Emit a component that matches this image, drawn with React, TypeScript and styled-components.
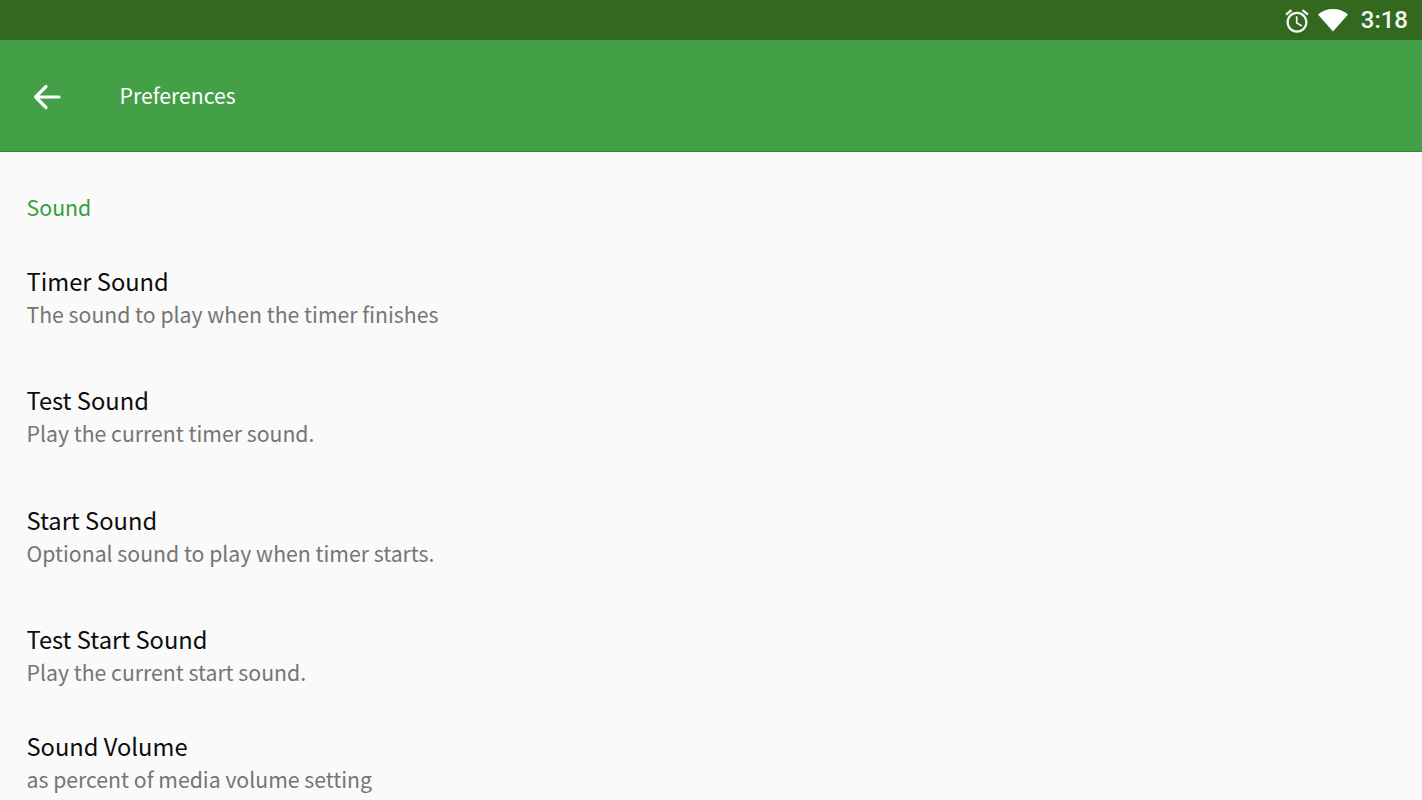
import React from "react";
import styled, { createGlobalStyle } from "styled-components";

const Global = createGlobalStyle`
  html, body { margin: 0; padding: 0; background: #fafafa; overflow: hidden; }
  body { font-family: "Noto Sans CJK SC", "Noto Sans", sans-serif; }
`;
const Page = styled.div`
  width: 1422px; height: 800px; display: flex; flex-direction: column; overflow: hidden; background: #fafafa;
`;
const StatusBar = styled.div`
  height: 40px; flex: none; background: #33691e; display: flex; align-items: center; justify-content: flex-end;
  padding-right: 14px; gap: 7px; color: #fff;
`;
const AlarmIcon = styled.svg`
  width: 28px; height: 28px; flex: none; margin-top: 2px; fill: #f4f7f2;
`;
const WifiIcon = styled.svg`
  width: 32px; height: 26px; flex: none; fill: #fff;
  margin-left: -1px;
`;
const Clock = styled.span`
  font-family: Roboto, sans-serif; font-size: 24px; font-weight: 500; line-height: 40px; color: #f4f7f2; margin-left: 5px;
`;
const Toolbar = styled.header`
  height: 111px; flex: none; background: #43a047; border-bottom: 1px solid #2e8b2e; display: flex; align-items: center;
  padding-left: 32px; box-sizing: content-box;
`;
const BackIcon = styled.svg`
  width: 30px; height: 30px; flex: none; margin-right: 57.5px;
`;
const Title = styled.h1`
  margin: 0 0 2px; font-size: 21.2px; font-weight: 400; color: #fff; line-height: 30px;
`;
const Content = styled.main`
  display: flex; flex-direction: column; padding: 39px 26.5px 0;
`;
const Section = styled.div`
  color: #35a03c; font-size: 21.33px; line-height: 32px; height: 32px; margin-bottom: 41px;
`;
const Row = styled.div<{ $compact?: boolean }>`
  display: flex; flex-direction: column; height: ${p => (p.$compact ? 107 : 119.33)}px; flex: none;
`;
const RowTitle = styled.div`
  color: #0c0c0c; font-size: 23.7px; line-height: 34px; height: 34px;
`;
const RowSub = styled.div`
  color: #757575; font-size: 21.22px; line-height: 32px; height: 32px;
`;

const rows = [
  ["Timer Sound", "The sound to play when the timer finishes"],
  ["Test Sound", "Play the current timer sound."],
  ["Start Sound", "Optional sound to play when timer starts."],
  ["Test Start Sound", "Play the current start sound."],
  ["Sound Volume", "as percent of media volume setting"],
];

export default function App() {
  return (
    <Page>
      <Global />
      <StatusBar>
        <AlarmIcon viewBox="0 0 24 24">
          <path d="M22 5.72l-4.6-3.86-1.29 1.53 4.6 3.86L22 5.72zM7.88 3.39L6.6 1.86 2 5.71l1.29 1.53 4.59-3.85zM12.5 8H11v6l4.75 2.85.75-1.23-4-2.37V8zM12 4c-4.97 0-9 4.03-9 9s4.03 9 9 9 9-4.03 9-9-4.03-9-9-9zm0 16c-3.87 0-7-3.13-7-7s3.13-7 7-7 7 3.13 7 7-3.13 7-7 7z" />
        </AlarmIcon>
        <WifiIcon viewBox="0 0 32 26">
          <path d="M1 7.5C5 4 10 2 16 2s11 2 15 5.5L16 24.5z" />
        </WifiIcon>
        <Clock>3:18</Clock>
      </StatusBar>
      <Toolbar>
        <BackIcon viewBox="0 0 30 30" fill="none" stroke="#fff" strokeWidth="3.2" strokeLinecap="round" strokeLinejoin="round">
          <path d="M3.6 16h23.4M14 5.5L3.6 16l10.4 10.5" />
        </BackIcon>
        <Title>Preferences</Title>
      </Toolbar>
      <Content>
        <Section>Sound</Section>
        {rows.map(([t, s], i) => (
          <Row key={t} $compact={i === 3}>
            <RowTitle>{t}</RowTitle>
            <RowSub>{s}</RowSub>
          </Row>
        ))}
      </Content>
    </Page>
  );
}
